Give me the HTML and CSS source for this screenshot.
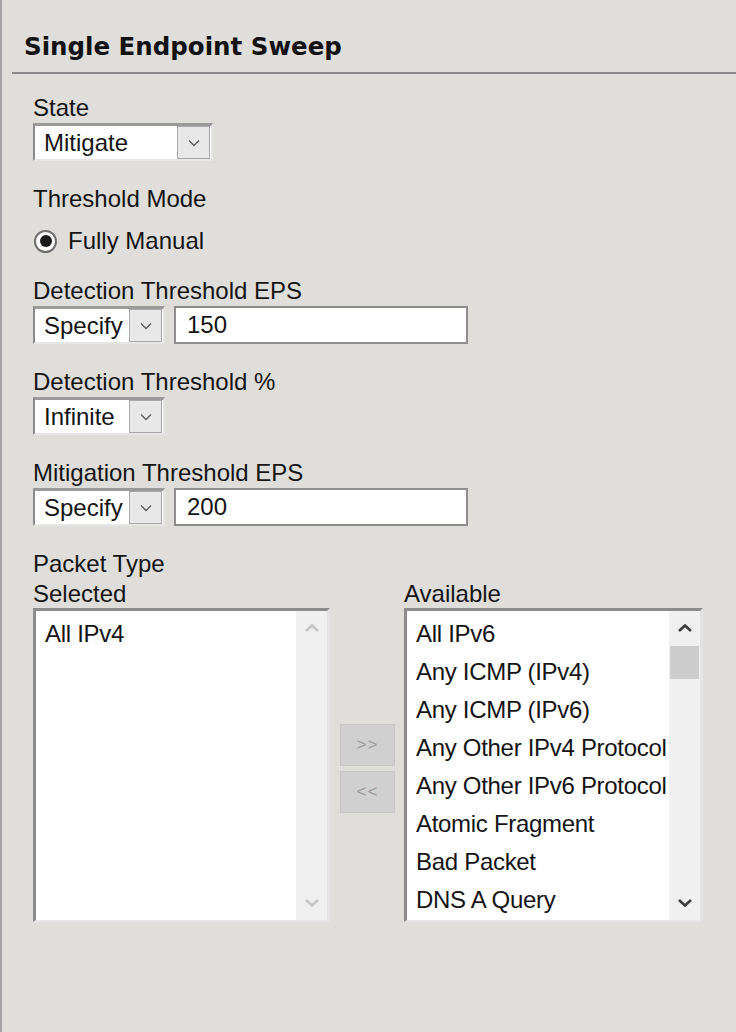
FILE: index.html
```html
<!DOCTYPE html>
<html lang="en">
<head>
<meta charset="utf-8">
<title>Single Endpoint Sweep</title>
<link rel="stylesheet" href="styles.css">
</head>
<body>
<div class="panel">
  <h1 class="title">Single Endpoint Sweep</h1>
  <div class="content">
    <div class="field">
      <div class="label">State</div>
      <div class="row">
        <div class="select select-state">
          <span class="select-value">Mitigate</span>
          <span class="select-btn"><svg width="12" height="8" viewBox="0 0 12 8"><path d="M1 1.5 L6 6.5 L11 1.5" fill="none" stroke="#5a5a5a" stroke-width="1.3"/></svg></span>
        </div>
      </div>
    </div>

    <div class="field field-radio">
      <div class="label">Threshold Mode</div>
      <div class="radio-row">
        <span class="radio"><span class="radio-dot"></span></span>
        <span class="radio-text">Fully Manual</span>
      </div>
    </div>

    <div class="field">
      <div class="label">Detection Threshold EPS</div>
      <div class="row">
        <div class="select select-small">
          <span class="select-value">Specify</span>
          <span class="select-btn"><svg width="12" height="8" viewBox="0 0 12 8"><path d="M1 1.5 L6 6.5 L11 1.5" fill="none" stroke="#5a5a5a" stroke-width="1.3"/></svg></span>
        </div>
        <div class="textbox">150</div>
      </div>
    </div>

    <div class="field">
      <div class="label">Detection Threshold %</div>
      <div class="row">
        <div class="select select-small">
          <span class="select-value">Infinite</span>
          <span class="select-btn"><svg width="12" height="8" viewBox="0 0 12 8"><path d="M1 1.5 L6 6.5 L11 1.5" fill="none" stroke="#5a5a5a" stroke-width="1.3"/></svg></span>
        </div>
      </div>
    </div>

    <div class="field">
      <div class="label">Mitigation Threshold EPS</div>
      <div class="row">
        <div class="select select-small">
          <span class="select-value">Specify</span>
          <span class="select-btn"><svg width="12" height="8" viewBox="0 0 12 8"><path d="M1 1.5 L6 6.5 L11 1.5" fill="none" stroke="#5a5a5a" stroke-width="1.3"/></svg></span>
        </div>
        <div class="textbox">200</div>
      </div>
    </div>

    <div class="field packet">
      <div class="label">Packet Type</div>
      <div class="dual">
        <div class="label col-sel">Selected</div>
        <div class="label col-avail">Available</div>

        <div class="listbox list-sel">
          <ul class="items">
            <li>All IPv4</li>
          </ul>
          <div class="scroll scroll-disabled">
            <span class="arrow"><svg width="16" height="10" viewBox="0 0 16 10"><path d="M2 8 L8 2.5 L14 8" fill="none" stroke="#c4c4c4" stroke-width="2.4"/></svg></span>
            <span class="track"></span>
            <span class="arrow"><svg width="16" height="10" viewBox="0 0 16 10"><path d="M2 2 L8 7.5 L14 2" fill="none" stroke="#c4c4c4" stroke-width="2.4"/></svg></span>
          </div>
        </div>

        <div class="movers">
          <button class="mover" type="button">&gt;&gt;</button>
          <button class="mover" type="button">&lt;&lt;</button>
        </div>

        <div class="listbox list-avail">
          <ul class="items">
            <li>All IPv6</li>
            <li>Any ICMP (IPv4)</li>
            <li>Any ICMP (IPv6)</li>
            <li>Any Other IPv4 Protocol</li>
            <li>Any Other IPv6 Protocol</li>
            <li>Atomic Fragment</li>
            <li>Bad Packet</li>
            <li>DNS A Query</li>
          </ul>
          <div class="scroll">
            <span class="arrow"><svg width="16" height="10" viewBox="0 0 16 10"><path d="M2 8 L8 2.5 L14 8" fill="none" stroke="#3c3c3c" stroke-width="2.6"/></svg></span>
            <span class="track"><span class="thumb"></span></span>
            <span class="arrow"><svg width="16" height="10" viewBox="0 0 16 10"><path d="M2 2 L8 7.5 L14 2" fill="none" stroke="#3c3c3c" stroke-width="2.6"/></svg></span>
          </div>
        </div>
      </div>
    </div>
  </div>
</div>
</body>
</html>
```

FILE: styles.css
```css
* { box-sizing: border-box; }

html, body {
  margin: 0;
  padding: 0;
  background: #dfdeda;
}

body {
  font-family: "Liberation Sans", Arial, sans-serif;
  font-size: 24px;
  color: #141414;
}

.panel {
  min-height: 1032px;
  border-left: 2px solid #a3a3a3;
}

.title {
  margin: 0 0 0 10px;
  padding: 32px 0 10px 12px;
  font-family: "DejaVu Sans", Verdana, sans-serif;
  font-weight: bold;
  font-size: 24.5px;
  line-height: 30px;
  color: #111;
  border-bottom: 2px solid #8a8a8a;
}

.content {
  padding: 21px 0 0 31px;
}

.field {
  margin-bottom: 25px;
}

.field-radio {
  margin-bottom: 23px;
}

.label {
  line-height: 26px;
  height: 26px;
  white-space: nowrap;
}

.row {
  display: flex;
  gap: 9px;
  margin-top: 2px;
}

.select {
  display: flex;
  height: 38px;
  background: #fff;
  border-style: solid;
  border-width: 3px 2px 2px 2px;
  border-color: #9a9a9a #e6e6e6 #e6e6e6 #8a8a8a;
}

.select-state { width: 180px; }
.select-small { width: 132px; }

.select-value {
  flex: 1;
  padding-left: 9px;
  line-height: 33px;
  white-space: nowrap;
  overflow: hidden;
}

.select-btn {
  width: 33px;
  margin: 0 1px 0 0;
  background: #e8e8e8;
  border: 1px solid #a9a9a9;
  display: flex;
  align-items: center;
  justify-content: center;
}

.textbox {
  width: 294px;
  height: 38px;
  background: #fff;
  border: 2px solid #8e8e8e;
  padding-left: 11px;
  line-height: 34px;
}

.radio-row {
  display: flex;
  align-items: center;
  height: 28px;
  margin-top: 15px;
  line-height: 28px;
}

.radio {
  width: 23px;
  height: 23px;
  margin-left: 1px;
  border-radius: 50%;
  border: 2px solid #6f6f6f;
  background: #fff;
  display: flex;
  align-items: center;
  justify-content: center;
}

.radio-dot {
  width: 12px;
  height: 12px;
  border-radius: 50%;
  background: #1a1a1a;
}

.radio-text {
  margin-left: 11px;
}

.packet .dual {
  display: grid;
  grid-template-columns: 297px 74px 299px;
  grid-template-rows: 26px 314px;
  row-gap: 1px;
  margin-top: 4px;
}

.col-sel { grid-column: 1; grid-row: 1; }
.col-avail { grid-column: 3; grid-row: 1; }
.list-sel { grid-column: 1; grid-row: 2; }
.movers { grid-column: 2; grid-row: 2; }
.list-avail { grid-column: 3; grid-row: 2; }

.listbox {
  display: flex;
  background: #fff;
  border-style: solid;
  border-width: 3px 3px 2px 3px;
  border-color: #8c8c8c #e3e3e3 #e6e6e6 #8c8c8c;
  overflow: hidden;
}

.items {
  flex: 1;
  min-width: 0;
  list-style: none;
  margin: 0;
  padding: 4px 0 0 9px;
  overflow: hidden;
}

.items li {
  height: 38px;
  line-height: 38px;
  white-space: nowrap;
  letter-spacing: -0.3px;
}

.scroll {
  width: 31px;
  flex: none;
  background: #f0f0f0;
  display: flex;
  flex-direction: column;
}

.arrow {
  height: 34px;
  display: flex;
  align-items: center;
  justify-content: center;
}

.track {
  flex: 1;
  padding: 1px 1px 0 1px;
}

.thumb {
  display: block;
  height: 33px;
  background: #cdcdcd;
}

.movers {
  display: flex;
  flex-direction: column;
  justify-content: center;
  gap: 5px;
  padding: 6px 9px 0 10px;
}

.mover {
  width: 55px;
  height: 42px;
  margin: 0;
  padding: 0;
  background: #d0d0d0;
  border: 1px solid #c6c6c6;
  color: #9a9a9a;
  font-family: "Liberation Sans", Arial, sans-serif;
  font-size: 17px;
  letter-spacing: 1px;
}
```
